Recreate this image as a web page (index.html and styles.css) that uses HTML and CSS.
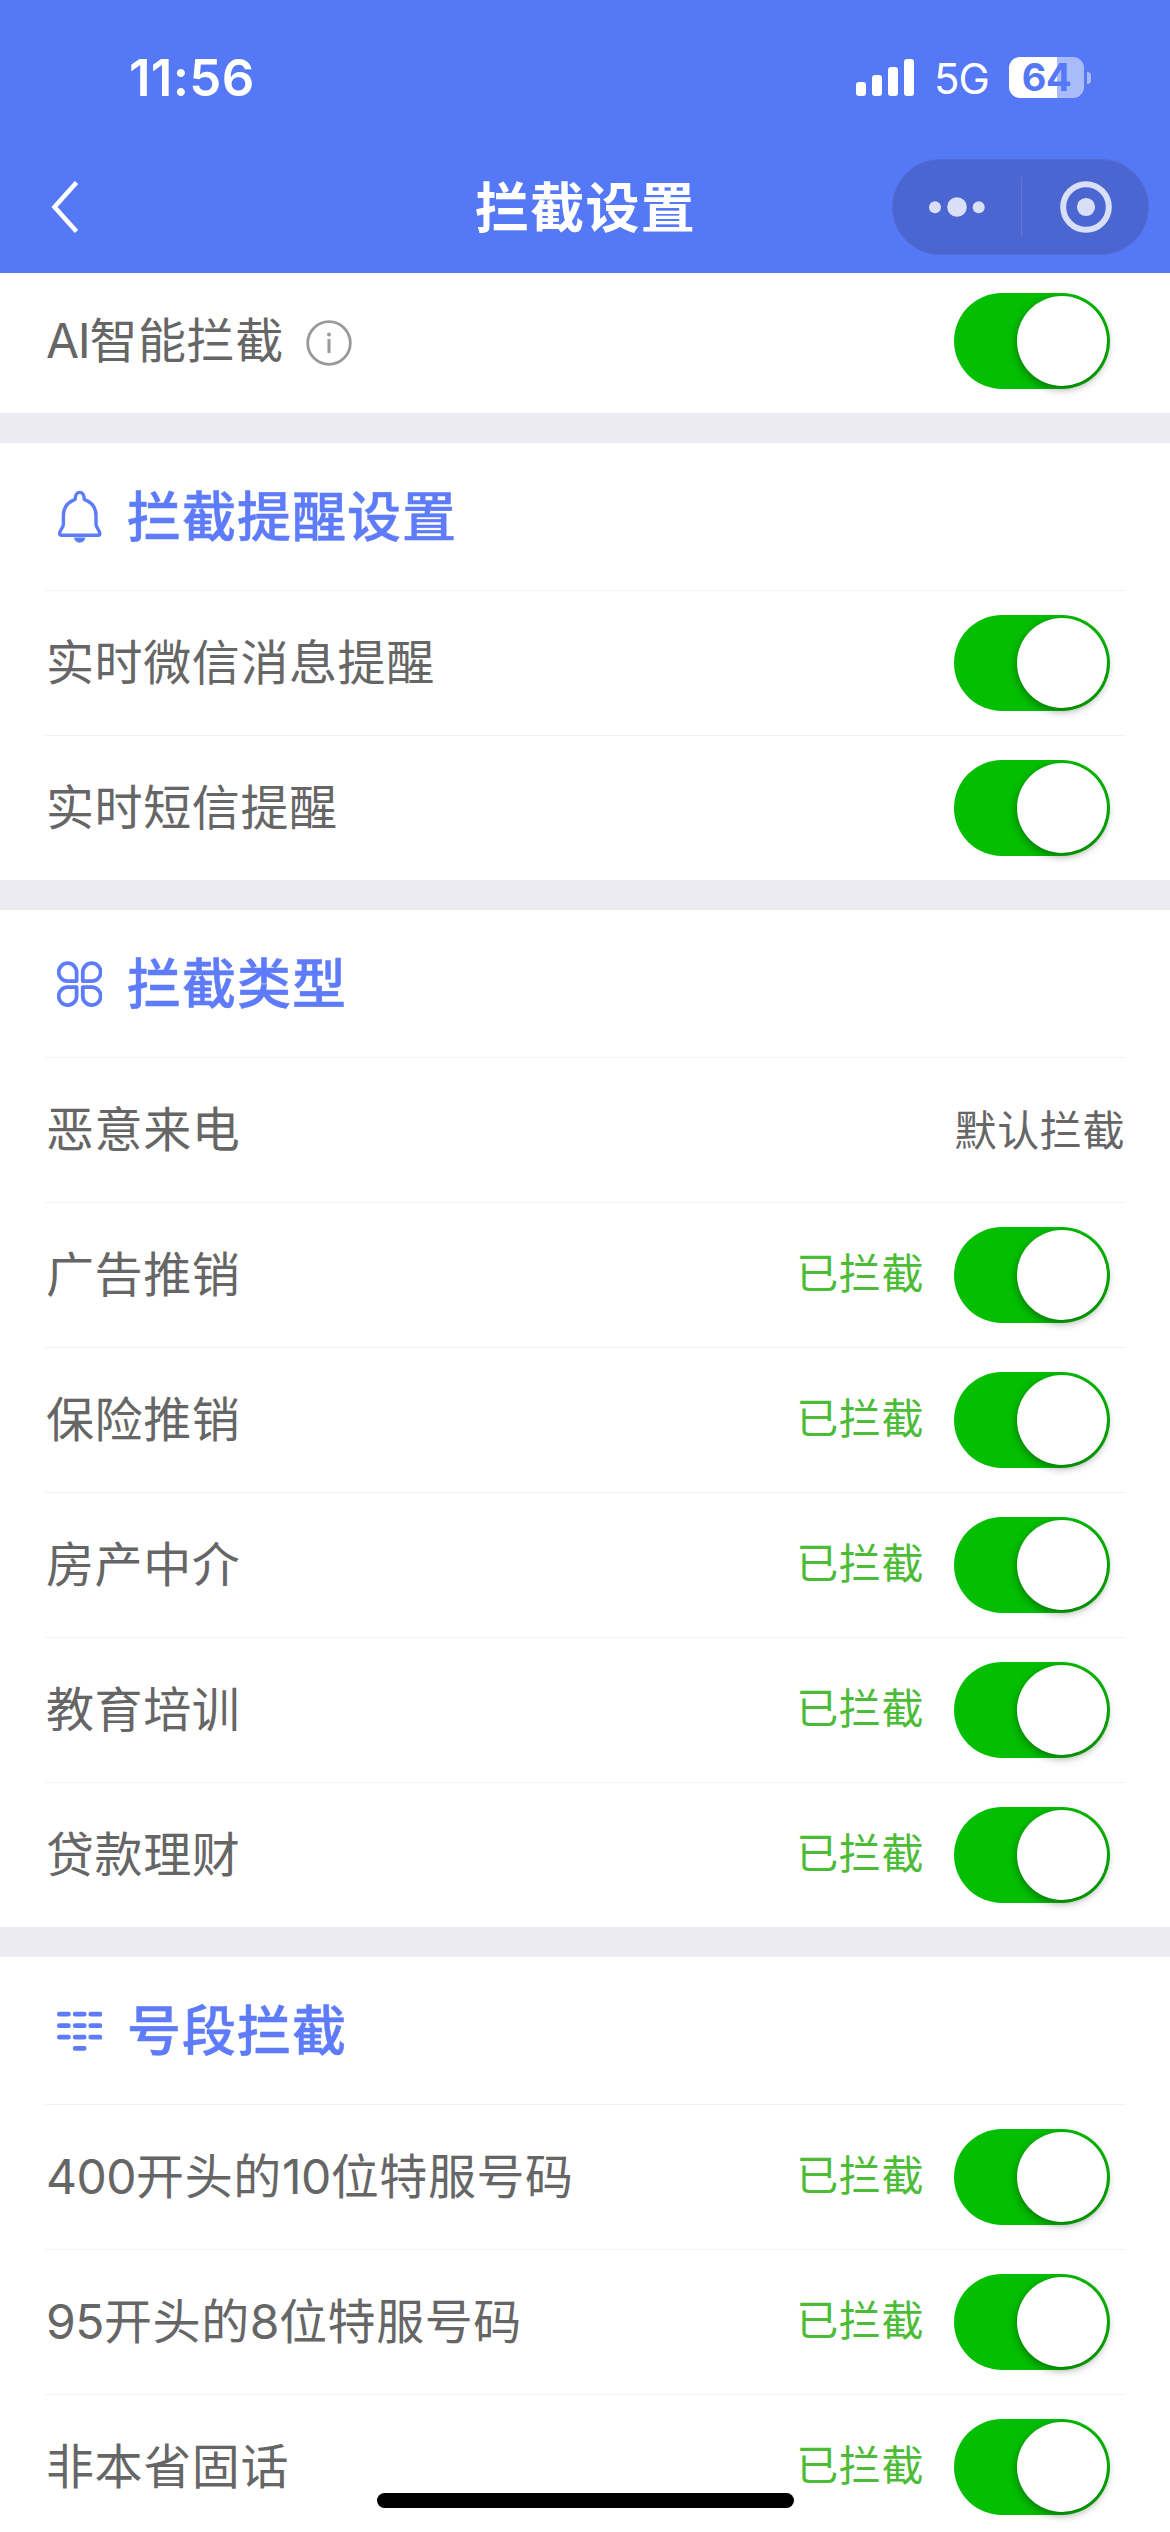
FILE: index.html
```html
<!DOCTYPE html>
<html lang="zh-CN">
<head>
<meta charset="utf-8">
<title>拦截设置</title>
<link rel="stylesheet" href="styles.css">
</head>
<body>
<header class="header">
  <div class="status">
    <span class="time">11:56</span>
    <div class="status-icons">
      <svg class="signal" viewBox="0 0 58 37"><rect x="0" y="23" width="10" height="14" rx="3"/><rect x="16" y="16" width="10" height="21" rx="3"/><rect x="32" y="8" width="10" height="29" rx="3"/><rect x="48" y="0" width="10" height="37" rx="3"/></svg>
      <span class="network">5G</span>
      <div class="battery"><span class="battery-body">64</span><span class="battery-tip"></span></div>
    </div>
  </div>
  <nav class="nav">
    <svg class="back" viewBox="0 0 30 54"><path d="M26.500 2.500 4.500 27 26.500 51.500"/></svg>
    <h1 class="title">拦截设置</h1>
    <div class="capsule">
      <svg class="more" viewBox="0 0 56 20"><circle cx="6" cy="10.3" r="6"/><circle cx="28" cy="10" r="9.8"/><circle cx="49.7" cy="10.3" r="6"/></svg>
      <span class="capsule-line"></span>
      <svg class="close" viewBox="0 0 52 52"><circle class="ring" cx="26" cy="26" r="22.8"/><circle cx="26" cy="26" r="9.1"/></svg>
    </div>
  </nav>
</header>
<main>
  <section class="group">
    <div class="row row-first"><span class="label"><span class="latin-caps">AI</span>智能拦截</span>
      <svg class="info" viewBox="0 0 46 46"><circle class="info-ring" cx="23" cy="23" r="21.3"/><circle cx="23" cy="14.5" r="1.9"/><path d="M23 19v14"/></svg>
      <span class="switch"></span></div>
  </section>
  <section class="group">
    <h2 class="heading"><svg class="icon" viewBox="0 0 45 54"><path d="M18.2 9.3C18.2 0 27.2 0 27.2 9.3 34.5 12 39 17.500 39 25.500V34C39 38 42.800 40 42.800 43.500Q42.800 45.300 41 45.300H4.400Q2.600 45.300 2.600 43.500C2.600 40 6.400 38 6.400 34V25.500C6.400 17.500 10.900 12 18.200 9.300" stroke-width="3.4"/><path class="solid" d="M16.800 47.500H28.600Q27 52.700 22.700 52.700 18.400 52.700 16.800 47.500Z"/></svg><span>拦截提醒设置</span></h2>
    <div class="row"><span class="label">实时微信消息提醒</span><span class="switch"></span></div>
    <div class="row"><span class="label">实时短信提醒</span><span class="switch"></span></div>
  </section>
  <section class="group">
    <h2 class="heading"><svg class="icon" viewBox="0 0 45 54"><g stroke-width="3.8"><path d="M19.600 24.100V15.200A8.950 8.950 0 1 0 10.650 24.100Z"/><path d="M25.800 24.100V15.200A8.950 8.950 0 1 1 34.750 24.100Z"/><path d="M19.600 30.200V39.100A8.950 8.950 0 1 1 10.650 30.200Z"/><path d="M25.800 30.200V39.100A8.950 8.950 0 1 0 34.750 30.200Z"/></g></svg><span>拦截类型</span></h2>
    <div class="row"><span class="label">恶意来电</span><span class="value">默认拦截</span></div>
    <div class="row"><span class="label">广告推销</span><span class="state">已拦截</span><span class="switch"></span></div>
    <div class="row"><span class="label">保险推销</span><span class="state">已拦截</span><span class="switch"></span></div>
    <div class="row"><span class="label">房产中介</span><span class="state">已拦截</span><span class="switch"></span></div>
    <div class="row"><span class="label">教育培训</span><span class="state">已拦截</span><span class="switch"></span></div>
    <div class="row"><span class="label">贷款理财</span><span class="state">已拦截</span><span class="switch"></span></div>
  </section>
  <section class="group">
    <h2 class="heading"><svg class="icon" viewBox="0 0 45 54"><path d="M2.400 10.200h9M18.200 10.200h9M33.800 10.200h9M2.400 21.700h9M18.200 21.700h9M33.800 21.700h9M2.400 33.200h9M18.200 33.200h9M33.800 33.200h9M18.200 44.400h9" stroke-width="4.800"/></svg><span>号段拦截</span></h2>
    <div class="row"><span class="label"><span class="digits">400</span>开头的<span class="digits">10</span>位特服号码</span><span class="state">已拦截</span><span class="switch"></span></div>
    <div class="row"><span class="label"><span class="digits">95</span>开头的<span class="digits">8</span>位特服号码</span><span class="state">已拦截</span><span class="switch"></span></div>
    <div class="row"><span class="label">非本省固话</span><span class="state">已拦截</span><span class="switch"></span></div>
  </section>
</main>
<div class="home-indicator"></div>
</body>
</html>
```
FILE: styles.css
```css
* { box-sizing: border-box; }
body {
  margin: 0;
  width: 1170px;
  height: 2532px;
  overflow: hidden;
  position: relative;
  background: #fff;
  color: #666;
  font-family: Inter, "Noto Sans CJK SC", sans-serif;
}
svg { display: block; flex: none; }
h1, h2 { margin: 0; }

.header { height: 273px; background: #5578f6; color: #fff; }
.status {
  height: 155px;
  padding: 0 79px 0 129px;
  display: flex;
  align-items: center;
  justify-content: space-between;
}
.time { font-size: 51px; font-weight: 600; line-height: 60px; letter-spacing: 0.3px; padding-top: 1px; }
.status-icons { display: flex; align-items: center; }
.signal { width: 58px; height: 37px; fill: #fff; }
.network { width: 95px; padding-left: 20px; padding-top: 3px; font-size: 42px; line-height: 50px; letter-spacing: -1px; }
.battery { display: flex; align-items: center; gap: 3px; }
.battery-body {
  width: 75px;
  height: 41px;
  border-radius: 11px;
  background: linear-gradient(90deg, #fff 48px, #aabbfa 48px);
  color: #5578f6;
  font-size: 38px;
  font-weight: 700;
  line-height: 41px;
  letter-spacing: -0.5px;
  text-align: center;
}
.battery-tip { width: 4px; height: 12px; background: #aabbfa; border-radius: 0 4px 4px 0; }

.nav {
  height: 104px;
  padding: 0 21px 0 50px;
  display: grid;
  grid-template-columns: 257px 1fr 257px;
  align-items: center;
}
.back { width: 30px; height: 54px; fill: none; stroke: #fff; stroke-width: 4.6; }
.title {
  font-size: 54px;
  font-weight: 700;
  line-height: 80px;
  letter-spacing: 1.2px;
  text-align: center;
  margin: 3px 28px 0 0;
}
.capsule {
  height: 96px;
  border: 1px solid #536cd0;
  border-radius: 48px;
  background: #4b66d0;
  display: flex;
  align-items: center;
  padding: 0 36px;
  fill: #d9dff6;
}
.more { width: 56px; height: 20px; }
.capsule-line { width: 1px; height: 60px; margin: 0 38px 0 36px; background: #5e76d4; }
.close { width: 52px; height: 52px; }
.ring { fill: none; stroke: #d9dff6; stroke-width: 6; }

.group + .group { border-top: 30px solid #ebebf1; }
.heading {
  height: 147px;
  padding-left: 57px;
  display: flex;
  align-items: center;
  gap: 25px;
  color: #5e7cfa;
  font-size: 54px;
  font-weight: 500;
  letter-spacing: 1px;
  line-height: 80px;
  -webkit-text-stroke: 0.5px #5e7cfa;
}
.heading span { padding-top: 3px; }
.icon {
  width: 45px;
  height: 54px;
  fill: none;
  stroke: #5e7cfa;
  stroke-linejoin: round;
  stroke-linecap: round;
}
.solid { fill: #5e7cfa; stroke: none; }
.row {
  height: 145px;
  margin: 0 45px;
  border-top: 1px solid #f2f2f2;
  display: flex;
  align-items: center;
}
.row-first { height: 140px; border: 0; padding-bottom: 4px; }
.label { padding-left: 1px; font-size: 48px; line-height: 72px; letter-spacing: 0.6px; }
.latin-caps { letter-spacing: -1.3px; }
.digits { letter-spacing: -0.5px; }
.info { width: 46px; height: 46px; margin: 4px 0 0 22px; fill: #999; stroke: none; }
.info-ring { fill: none; stroke: #999; stroke-width: 2.8; }
.info path { stroke: #999; stroke-width: 3; }
.value, .state { margin-left: auto; font-size: 42px; line-height: 62px; letter-spacing: 0.6px; }
.value { padding-top: 2px; }
.state { color: #4cbc37; margin-right: 30px; padding-bottom: 3px; }
.state + .switch { margin-left: 0; }
.switch {
  flex: none;
  width: 156px;
  height: 96px;
  margin: 0 15px 0 auto;
  padding: 3px;
  border-radius: 48px;
  background: #04be02;
}
.switch::after {
  content: "";
  display: block;
  width: 90px;
  height: 90px;
  margin-left: auto;
  border-radius: 50%;
  background: #fff;
  box-shadow: 0 3px 9px rgba(0, 0, 0, 0.4);
}
.home-indicator {
  position: absolute;
  left: 377px;
  bottom: 24px;
  width: 417px;
  height: 15px;
  border-radius: 8px;
  background: #000;
}
```
